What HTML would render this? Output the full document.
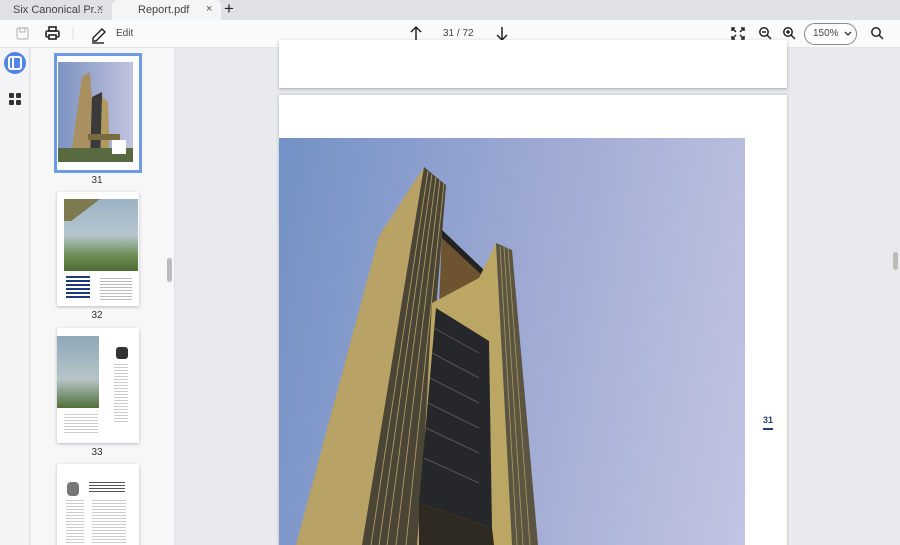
<!DOCTYPE html><html><head><style>
*{margin:0;padding:0;box-sizing:border-box}
html,body{width:900px;height:545px;overflow:hidden}
body{background:#e9eaee;font-family:"Liberation Sans",sans-serif}
#w{position:relative;width:900px;height:545px;overflow:hidden}
.a{position:absolute}
.t{font-size:11px;color:#333}
.thumb{position:absolute;background:#fff;box-shadow:0 1px 3px rgba(0,0,0,.25)}
.lbl{position:absolute;font-size:10px;color:#333;width:40px;text-align:center}
</style></head><body><div id="w">
<div class="a" style="left:0;top:0;width:900px;height:20px;background:#dfe1e4"></div>
<div class="a t" style="left:13px;top:4px;color:#444">Six Canonical Pr...</div>
<div class="a t" style="left:97px;top:3px;color:#555">×</div>
<div class="a" style="left:112px;top:0;width:109px;height:20px;background:#f4f5f6;border-radius:6px 6px 0 0"></div>
<div class="a t" style="left:138px;top:4px;color:#444">Report.pdf</div>
<div class="a t" style="left:206px;top:3px;color:#555">×</div>
<div class="a" style="left:224px;top:-1px;font-size:17px;color:#222">+</div>
<div class="a" style="left:0;top:20px;width:900px;height:28px;background:#fafafa;border-bottom:1px solid #e6e6e8"></div>
<svg class="a" style="left:0;top:20px" width="900" height="28">
<g fill="none" stroke="#bbb" stroke-width="1.2"><rect x="17" y="8" width="11" height="11" rx="1.5"/><rect x="20" y="8" width="5" height="4"/></g>
<g fill="none" stroke="#222" stroke-width="1.6"><rect x="46" y="11" width="13" height="6" rx="1.5"/><rect x="49" y="7" width="7" height="4"/><rect x="49" y="15" width="7" height="4" fill="#fff"/></g>
<line x1="73" y1="7" x2="73" y2="20" stroke="#ddd"/>
<g fill="none" stroke="#222" stroke-width="1.4"><path d="M93 18 L102 9 L105 12 L96 21 L93 21 Z"/><line x1="92" y1="23" x2="104" y2="23"/></g>
<g fill="none" stroke="#222" stroke-width="1.5"><path d="M416 20 V7 M411 12 L416 7 L421 12"/><path d="M502 7 V20 M497 15 L502 20 L507 15"/></g>
<g fill="none" stroke="#222" stroke-width="1.5"><path d="M732 11 V8 H735 M741 8 H744 V11 M744 16 V19 H741 M735 19 H732 V16 M733 9 L736 12 M743 9 L740 12 M743 18 L740 15 M733 18 L736 15"/>
<circle cx="764" cy="12" r="4.2"/><path d="M767 15 L771 19 M762 12 H766"/>
<circle cx="788" cy="12" r="4.2"/><path d="M791 15 L795 19 M786 12 H790 M788 10 V14"/>
<circle cx="876" cy="12" r="4.2"/><path d="M879 15 L883 19"/></g>
<rect x="804.5" y="3.5" width="52" height="21" rx="10.5" fill="#fff" stroke="#888"/>
<path d="M845 12 L848 15 L851 12" fill="none" stroke="#333" stroke-width="1.3"/>
</svg>
<div class="a t" style="left:116px;top:28px;color:#444;font-size:10px">Edit</div>
<div class="a t" style="left:443px;top:28px;color:#444;font-size:10px">31 / 72</div>
<div class="a t" style="left:813px;top:28px;color:#444;font-size:10px">150%</div>
<div class="a" style="left:0;top:48px;width:30px;height:497px;background:#f4f4f6;border-right:1px solid #e3e3e6"></div>
<svg class="a" style="left:0;top:48px" width="30" height="60"><circle cx="15" cy="15" r="11" fill="#4f86e5"/><rect x="9" y="9" width="12" height="12" rx="2" fill="none" stroke="#fff" stroke-width="2"/><line x1="13" y1="9" x2="13" y2="21" stroke="#fff" stroke-width="2"/>
<g fill="#333"><rect x="9" y="45" width="5" height="5" rx="1"/><rect x="16" y="45" width="5" height="5" rx="1"/><rect x="9" y="52" width="5" height="5" rx="1"/><rect x="16" y="52" width="5" height="5" rx="1"/></g></svg>
<div class="a" style="left:31px;top:48px;width:144px;height:497px;background:#f7f7f8;border-right:1px solid #e0e0e3"></div>
<div class="a" style="left:167px;top:258px;width:5px;height:24px;background:#bbb;border-radius:3px"></div>
<div class="a" style="left:54px;top:53px;width:88px;height:120px;border:3px solid #6d9be6;background:#fff"></div>
<div class="a" style="left:58px;top:62px;width:75px;height:100px;background:linear-gradient(90deg,#7e93c2,#c0c3de)"></div>
<svg class="a" style="left:58px;top:62px" width="75" height="100"><polygon points="12,100 24,15 32,10 38,100" fill="#a89060"/><polygon points="32,100 34,35 44,30 46,100" fill="#3a3a3a"/><polygon points="42,100 44,35 50,40 52,100" fill="#b09a60"/><rect x="30" y="72" width="32" height="6" fill="#7a6a40"/><rect x="0" y="86" width="75" height="14" fill="#5a6a40"/><rect x="54" y="78" width="14" height="14" fill="#fff"/></svg>
<div class="lbl" style="left:77px;top:175px">31</div>
<div class="thumb" style="left:57px;top:192px;width:82px;height:114px"></div>
<div class="a" style="left:64px;top:199px;width:74px;height:72px;background:linear-gradient(180deg,#9bb2c4,#b6c6cf 50%,#6a8a4e 80%,#4e6d36)"></div>
<div class="a" style="left:64px;top:199px;width:36px;height:22px;background:#7e7a50;clip-path:polygon(0 0,100% 0,20% 100%,0 100%)"></div>
<div class="a" style="left:66px;top:276px;width:24px;height:24px;background:repeating-linear-gradient(#1d3a7a 0 2px,transparent 2px 4px)"></div>
<div class="a" style="left:100px;top:278px;width:32px;height:22px;background:repeating-linear-gradient(#bbb 0 1px,transparent 1px 3px)"></div>
<div class="lbl" style="left:77px;top:310px">32</div>
<div class="thumb" style="left:57px;top:328px;width:82px;height:115px"></div>
<div class="a" style="left:57px;top:336px;width:42px;height:72px;background:linear-gradient(180deg,#8fa8b8,#b6c4c8 60%,#4f6f3a)"></div>
<div class="a" style="left:116px;top:347px;width:12px;height:12px;background:#333;border-radius:3px"></div>
<div class="a" style="left:114px;top:364px;width:14px;height:60px;background:repeating-linear-gradient(#ccc 0 1px,transparent 1px 3px)"></div>
<div class="a" style="left:64px;top:414px;width:34px;height:20px;background:repeating-linear-gradient(#ccc 0 1px,transparent 1px 3px)"></div>
<div class="lbl" style="left:77px;top:447px">33</div>
<div class="thumb" style="left:57px;top:464px;width:82px;height:90px"></div>
<div class="a" style="left:67px;top:482px;width:12px;height:14px;background:#777;border-radius:4px"></div>
<div class="a" style="left:89px;top:482px;width:36px;height:10px;background:repeating-linear-gradient(#555 0 1px,transparent 1px 3px)"></div>
<div class="a" style="left:92px;top:500px;width:34px;height:45px;background:repeating-linear-gradient(#ccc 0 1px,transparent 1px 3px)"></div>
<div class="a" style="left:66px;top:500px;width:18px;height:45px;background:repeating-linear-gradient(#ccc 0 1px,transparent 1px 3px)"></div>
<div class="a" style="left:279px;top:40px;width:508px;height:48px;background:#fff;box-shadow:0 1px 3px rgba(0,0,0,.3)"></div>
<div class="a" style="left:279px;top:95px;width:508px;height:460px;background:#fff;box-shadow:0 0 3px rgba(0,0,0,.25)"></div>
<div class="a" style="left:279px;top:138px;width:466px;height:407px;background:linear-gradient(100deg,#7391c5 0%,#9aa7d2 45%,#c2c5e2 100%)"></div>
<svg class="a" style="left:279px;top:138px" width="466" height="407">
<polygon points="100,98 145,29 147,407 17,407" fill="#b8a266"/>
<polygon points="145,29 167,47 138,407 83,407" fill="#4a4535"/>
<g stroke="#b09a62" stroke-width="0.9"><line x1="149" y1="33" x2="92" y2="407"/><line x1="153" y1="36" x2="100" y2="407"/><line x1="157" y1="39" x2="108" y2="407"/><line x1="161" y1="42" x2="117" y2="407"/><line x1="165" y1="45" x2="127" y2="407"/></g>
<polygon points="163,92 206,133 205,140 200,170 160,168" fill="#6e5330"/>
<polygon points="163,92 206,133 206,140 163,100" fill="#222"/>
<polygon points="200,140 217,105 233,407 140,407 153,165" fill="#bba664"/>
<polygon points="157,170 210,203 213,390 140,365" fill="#25272a"/>
<g stroke="#555" stroke-width="1"><line x1="155" y1="190" x2="200" y2="215"/><line x1="153" y1="215" x2="200" y2="240"/><line x1="151" y1="240" x2="200" y2="265"/><line x1="149" y1="265" x2="200" y2="290"/><line x1="147" y1="290" x2="200" y2="315"/><line x1="145" y1="320" x2="200" y2="345"/></g>
<polygon points="140,365 213,390 215,407 140,407" fill="#2e2a22"/>
<polygon points="217,105 233,112 259,407 233,407" fill="#5a5440"/>
<g stroke="#b09a62" stroke-width="0.8"><line x1="221" y1="108" x2="238" y2="407"/><line x1="225" y1="109" x2="244" y2="407"/><line x1="229" y1="110" x2="251" y2="407"/></g>
</svg>
<div class="a" style="left:763px;top:415px;font-size:9px;font-weight:bold;color:#2b3a78">31</div>
<div class="a" style="left:763px;top:428px;width:10px;height:2px;background:#2b3a78"></div>
<div class="a" style="left:893px;top:252px;width:5px;height:18px;background:#bbb;border-radius:3px"></div>
</div></body></html>
